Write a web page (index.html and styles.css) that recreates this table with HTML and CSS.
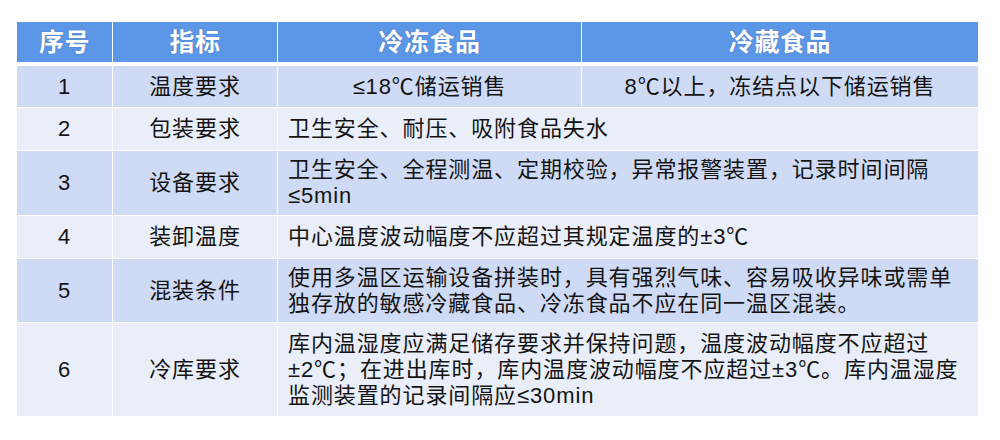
FILE: index.html
```html
<!DOCTYPE html>
<html lang="zh-CN">
<head>
<meta charset="utf-8">
<title>冷链要求</title>
<link rel="stylesheet" href="styles.css">
</head>
<body>
<div class="table">
  <div class="cell head">序号</div>
  <div class="cell head">指标</div>
  <div class="cell head">冷冻食品</div>
  <div class="cell head">冷藏食品</div>

  <div class="cell dark center">1</div>
  <div class="cell dark center">温度要求</div>
  <div class="cell dark center">≤18℃储运销售</div>
  <div class="cell dark center">8℃以上，冻结点以下储运销售</div>

  <div class="cell light center">2</div>
  <div class="cell light center">包装要求</div>
  <div class="cell light text wide">卫生安全、耐压、吸附食品失水</div>

  <div class="cell dark center">3</div>
  <div class="cell dark center">设备要求</div>
  <div class="cell dark text wide">卫生安全、全程测温、定期校验，异常报警装置，记录时间间隔<br>≤5min</div>

  <div class="cell light center">4</div>
  <div class="cell light center">装卸温度</div>
  <div class="cell light text wide">中心温度波动幅度不应超过其规定温度的±3℃</div>

  <div class="cell dark center">5</div>
  <div class="cell dark center">混装条件</div>
  <div class="cell dark text wide">使用多温区运输设备拼装时，具有强烈气味、容易吸收异味或需单<br>独存放的敏感冷藏食品、冷冻食品不应在同一温区混装。</div>

  <div class="cell light center">6</div>
  <div class="cell light center">冷库要求</div>
  <div class="cell light text wide">库内温湿度应满足储存要求并保持问题，温度波动幅度不应超过<br>±2℃；在进出库时，库内温度波动幅度不应超过±3℃。库内温湿度<br>监测装置的记录间隔应≤30min</div>
</div>
</body>
</html>
```

FILE: styles.css
```css
html, body {
  margin: 0;
  padding: 0;
  background: #ffffff;
}

body {
  font-family: "Liberation Sans", "Noto Sans CJK SC", sans-serif;
  color: #141414;
}

.table {
  display: grid;
  grid-template-columns: 95px 164px 303px 396px;
  grid-template-rows: 43px 41px 42px 64px 42px 63px 93px;
  gap: 1px;
  width: 961px;
  margin: 22px 0 0 17px;
  background: #ffffff;
}

.cell {
  display: flex;
  align-items: center;
  font-size: 22px;
  letter-spacing: 0.9px;
  line-height: 26px;
  box-sizing: border-box;
}

.head {
  background: #5c96e6;
  color: #ffffff;
  font-weight: bold;
  font-size: 25px;
  letter-spacing: 0.6px;
  justify-content: center;
  height: 40px;
  margin-bottom: 3px;
  text-shadow: 0 0 1px rgba(40, 60, 110, 0.6);
}

.dark {
  background: #cfdbf4;
}

.light {
  background: #e9eef9;
}

.center {
  justify-content: center;
  text-align: center;
}

.text {
  padding: 0 8px 0 10px;
}

.wide {
  grid-column: span 2;
}
```
